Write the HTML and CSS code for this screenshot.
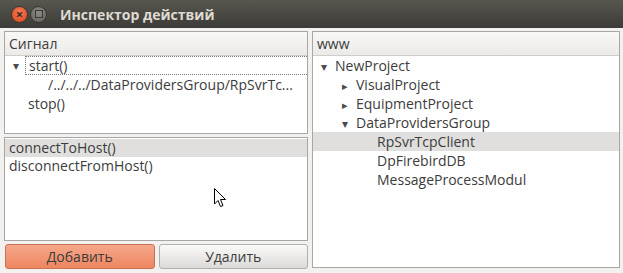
FILE: index.html
```html
<!DOCTYPE html>
<html lang="ru">
<head>
    <meta charset="UTF-8">
    <title>Инспектор действий</title>
    <link rel="stylesheet" href="styles.css">
</head>
<body>
    <!-- Window title bar -->
    <div class="titlebar">
        <span class="winbtn close">&#215;</span>
        <span class="winbtn mini"><span class="sq"></span></span>
        <span class="title">Инспектор действий</span>
    </div>

    <div class="content">
        <div class="left">
            <!-- Signals tree -->
            <div class="panel signals">
                <div class="header">Сигнал</div>
                <div class="row focus"><span class="arrow">&#9662;</span>start()</div>
                <div class="row lvl2">/../../../DataProvidersGroup/RpSvrTc...</div>
                <div class="row lvl1">stop()</div>
            </div>

            <!-- Slots list -->
            <div class="panel slots">
                <div class="item selected">connectToHost()</div>
                <div class="item">disconnectFromHost()</div>
            </div>

            <div class="buttons">
                <button class="btn add">Добавить</button>
                <button class="btn">Удалить</button>
            </div>
        </div>

        <!-- Object tree -->
        <div class="panel objects">
            <div class="header">www</div>
            <div class="row t0"><span class="arrow">&#9662;</span>NewProject</div>
            <div class="row t1"><span class="arrow small">&#9656;</span>VisualProject</div>
            <div class="row t1"><span class="arrow small">&#9656;</span>EquipmentProject</div>
            <div class="row t1"><span class="arrow">&#9662;</span>DataProvidersGroup</div>
            <div class="row t2 selected">RpSvrTcpClient</div>
            <div class="row t2">DpFirebirdDB</div>
            <div class="row t2">MessageProcessModul</div>
        </div>
    </div>

    <svg class="cursor" width="13" height="21" viewBox="0 0 13 21">
        <path d="M0.5 0.5 L0.5 16 L4 12.5 L6.5 18.5 L9 17.5 L6.5 11.5 L11.5 11.5 Z" fill="#fff" stroke="#000" stroke-width="1"/>
    </svg>
</body>
</html>
```

FILE: styles.css
```css
body { margin: 0; width: 623px; height: 273px; background-color: #f2f1f0; font-family: "Open Sans", "DejaVu Sans", sans-serif; font-size: 14px; color: #3c3c3c; position: relative; overflow: hidden; }

.titlebar { height: 28px; background: linear-gradient(#57564f, #3c3b37); display: flex; align-items: center; }
.winbtn { width: 17px; height: 17px; border-radius: 50%; display: flex; align-items: center; justify-content: center; box-sizing: border-box; }
.close { margin-left: 11px; background: radial-gradient(circle at 50% 35%, #f57b54, #d9451b); border: 1px solid #38372f; color: #3a2a20; font-size: 13px; font-weight: bold; line-height: 1; }
.mini { margin-left: 2px; background: radial-gradient(circle at 50% 35%, #8e8c86, #5f5e58); border: 1px solid #38372f; }
.mini .sq { width: 6px; height: 6px; border: 1px solid #3a3934; }
.title { margin-left: 13px; color: #dfdbd2; font-weight: bold; font-size: 14px; }

.content { display: flex; gap: 4px; padding: 3px 3px 0 4px; height: 238px; }
.left { width: 304px; display: flex; flex-direction: column; gap: 3px; }

.panel { background-color: #fff; border: 1px solid #a9a7a4; box-sizing: border-box; overflow: hidden; }
.signals { height: 103px; }
.slots { height: 104px; padding-top: 1px; }
.objects { flex: 1; height: 237px; }

.header { height: 24px; line-height: 23px; padding-left: 4px; background: linear-gradient(#f8f8f7, #eceae8); border-bottom: 1px solid #cfcdca; box-sizing: border-box; }

.row { height: 19px; line-height: 19px; white-space: nowrap; position: relative; }
.arrow { display: inline-block; width: 14px; color: #4a4a4a; font-size: 12px; }
.arrow.small { font-size: 11px; }

.signals .row { padding-left: 10px; }
.signals .focus { margin-left: 20px; padding-left: 3px; border: 1px dotted #777; border-right: none; height: 19px; line-height: 17px; box-sizing: border-box; }
.signals .focus .arrow { position: absolute; left: -13px; }
.signals .lvl1 { padding-left: 23px; }
.signals .lvl2 { padding-left: 43px; }

.objects .row.t0 { padding-left: 8px; }
.objects .row.t1 { padding-left: 29px; }
.objects .row.t2 { padding-left: 64px; }
.selected { background-color: #e0dfdd; }

.item { height: 18px; line-height: 18px; padding-left: 4px; }

.buttons { display: flex; gap: 4px; height: 25px; padding-left: 1px; }
.btn { flex: 1; font-family: inherit; font-size: 14px; color: #3c3c3c; border-radius: 3px; border: 1px solid #b2b0ad; background: linear-gradient(#fafaf9, #dcdad8); padding: 0; }
.btn.add { border-color: #c77456; background: linear-gradient(#f6a88b, #ee8560); }

.cursor { position: absolute; left: 214px; top: 188px; }
```
